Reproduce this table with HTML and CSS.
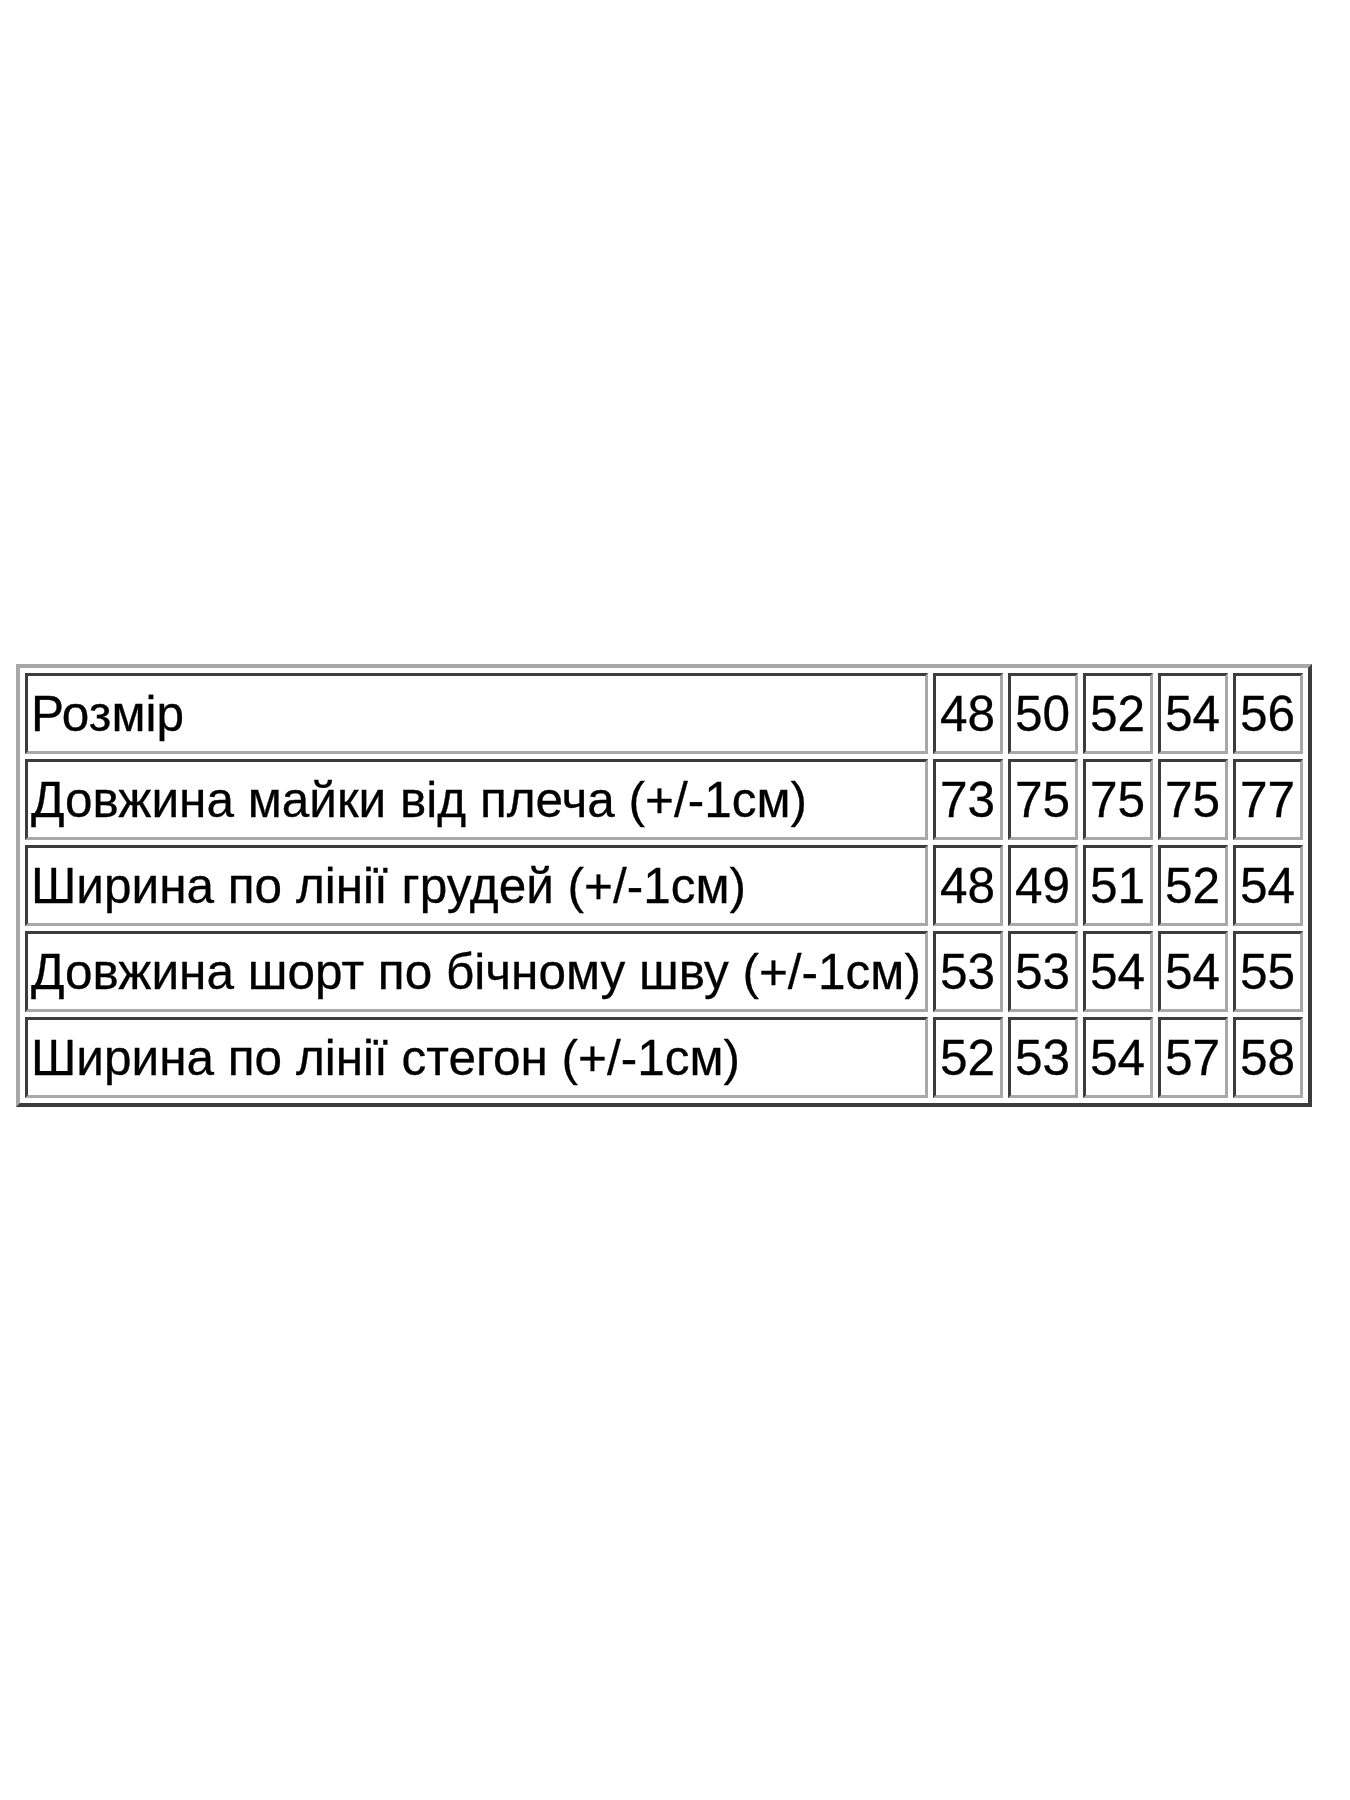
FILE: index.html
```html
<!DOCTYPE html>
<html lang="uk">
<head>
<meta charset="utf-8">
<title>Розмір</title>
<link rel="stylesheet" href="styles.css">
</head>
<body>
<table class="sizes">
  <tr><td class="label">Розмір</td><td class="num">48</td><td class="num">50</td><td class="num">52</td><td class="num">54</td><td class="num">56</td></tr>
  <tr><td class="label">Довжина майки від плеча (+/-1см)</td><td class="num">73</td><td class="num">75</td><td class="num">75</td><td class="num">75</td><td class="num">77</td></tr>
  <tr><td class="label">Ширина по лінії грудей (+/-1см)</td><td class="num">48</td><td class="num">49</td><td class="num">51</td><td class="num">52</td><td class="num">54</td></tr>
  <tr><td class="label">Довжина шорт по бічному шву (+/-1см)</td><td class="num">53</td><td class="num">53</td><td class="num">54</td><td class="num">54</td><td class="num">55</td></tr>
  <tr><td class="label">Ширина по лінії стегон (+/-1см)</td><td class="num">52</td><td class="num">53</td><td class="num">54</td><td class="num">57</td><td class="num">58</td></tr>
</table>
</body>
</html>
```
FILE: styles.css
```css
html, body {
  margin: 0;
  padding: 0;
  background: #ffffff;
}
body {
  font-family: "Liberation Sans", Arial, sans-serif;
  color: #000000;
}
.sizes {
  margin: 664px 0 0 16px;
  width: 1296px;
  table-layout: fixed;
  border-collapse: separate;
  border-spacing: 5px;
  border-style: solid;
  border-width: 4px;
  border-color: #a8a8a8 #3c3c3c #3c3c3c #a8a8a8;
}
.sizes td {
  box-sizing: border-box;
  height: 81px;
  padding: 0 3px;
  border-style: solid;
  border-width: 3px;
  border-color: #3c3c3c #a8a8a8 #a8a8a8 #3c3c3c;
  font-size: 49.5px;
  line-height: 56px;
  vertical-align: middle;
  white-space: nowrap;
  text-align: left;
  -webkit-text-stroke: 0.3px #000000;
}
.sizes td.label {
  width: 903px;
}
.sizes td.num {
  width: 70px;
  padding-left: 4px;
}
```
